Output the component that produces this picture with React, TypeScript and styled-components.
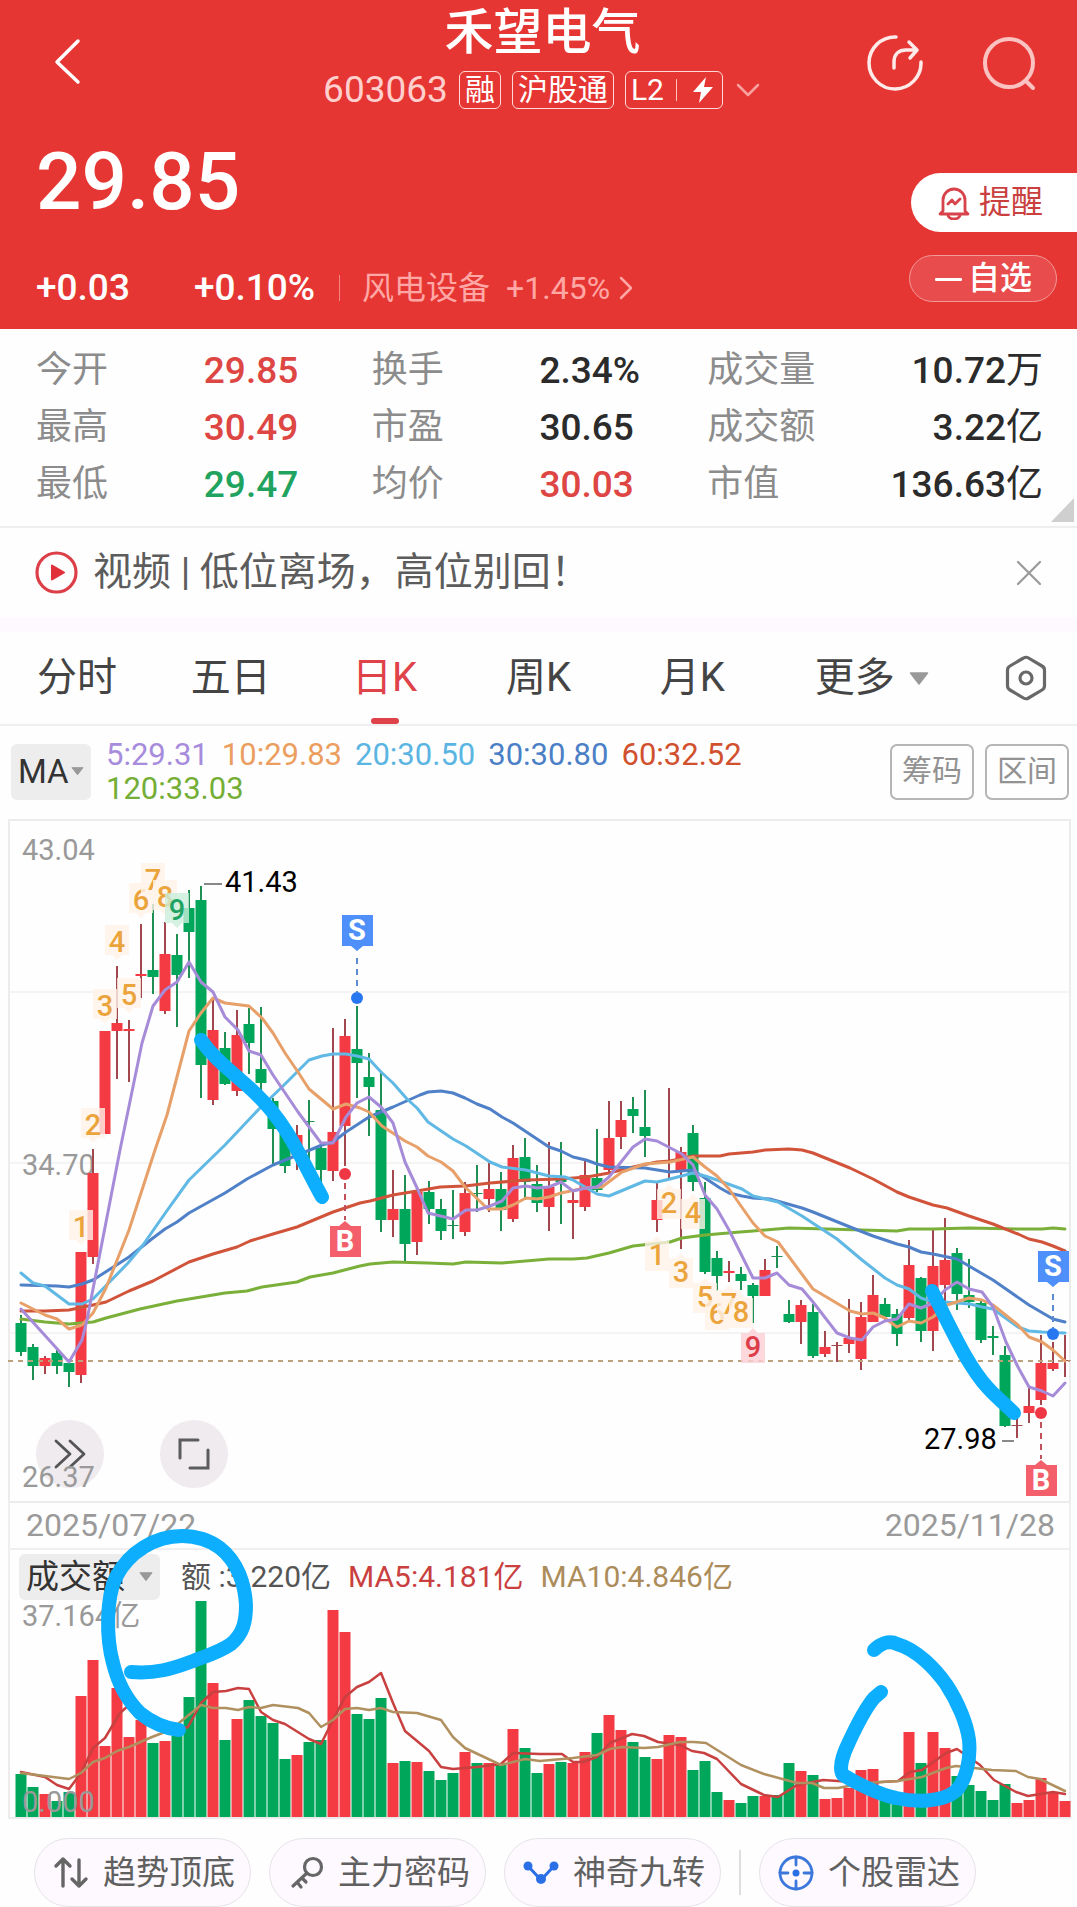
import React from "react";
import styled, { createGlobalStyle } from "styled-components";

const RED = "#e63633";
const UP = "#f43a43";
const DOWN = "#00a65a";
const UP_WICK = "#a2474d";
const DOWN_WICK = "#1f8f53";
const PEN = "#0daefe";
const FONT = 'Roboto, "Noto Sans CJK SC", sans-serif';

const GlobalStyle = createGlobalStyle`
  *, *::before, *::after { box-sizing: border-box; }
  body { margin: 0; background: #fff; font-family: ${FONT}; line-height: 1.15; color: #333; }
  button, select { font: inherit; color: inherit; border: 0; padding: 0; margin: 0; background: none; cursor: pointer; }
  h1, p, dl, dd, dt { margin: 0; font-weight: inherit; }
  svg { display: block; }
`;

const Page = styled.main`
  overflow: hidden;
  background: #fefefe;
`;

/* ---------- header ---------- */

const Header = styled.header`
  background: ${RED};
  color: #fff;
`;

const TopBar = styled.div`
  display: grid;
  grid-template-columns: 1fr auto 1fr;
  align-items: center;
  height: 126px;
  padding: 0 40px 0 48px;
`;

const IconButton = styled.button`
  display: inline-flex;
  align-items: center;
  justify-content: center;
`;

const TopActions = styled.div`
  display: flex;
  justify-content: flex-end;
  gap: 58px;
`;

const TitleBlock = styled.div`
  display: flex;
  flex-direction: column;
  align-items: center;
  gap: 8px;
  padding-bottom: 14px;
`;

const Title = styled.h1`
  font-size: 49px;
  line-height: 60px;
  font-weight: 500;
`;

const SubTitle = styled.div`
  display: flex;
  align-items: center;
  gap: 11px;
`;

const Code = styled.span`
  font-size: 37px;
  line-height: 38px;
  color: #ffcfcd;
`;

const Tag = styled.span`
  display: inline-flex;
  align-items: center;
  gap: 12px;
  height: 38px;
  padding: 0 5px;
  border: 1px solid #ffd9d7;
  border-radius: 6px;
  font-size: 30px;
  line-height: 36px;
`;

const TagRule = styled.i`
  width: 1px;
  height: 22px;
  background: #ffc2bf;
`;

const Quote = styled.div`
  display: flex;
  justify-content: space-between;
  height: 203px;
`;

const QuoteMain = styled.div`
  padding: 8px 0 0 36px;
`;

const Price = styled.p`
  font-size: 80px;
  line-height: 96px;
  font-weight: 500;
`;

const Changes = styled.div`
  display: flex;
  align-items: center;
  height: 40px;
  margin-top: 38px;
  font-size: 37px;
  font-weight: 500;
`;

const Change = styled.span<{ $gap: number }>`
  margin-right: ${(p) => p.$gap}px;
`;

const Sector = styled.a`
  display: flex;
  align-items: center;
  gap: 16px;
  padding-left: 22px;
  border-left: 1px solid #f18683;
  font-size: 32px;
  line-height: 26px;
  font-weight: 400;
  color: #ffa7a5;
  text-decoration: none;
`;

const SectorChange = styled.span`
  display: flex;
  align-items: center;
  gap: 9px;
`;

const QuoteActions = styled.div`
  display: flex;
  flex-direction: column;
  align-items: flex-end;
  padding-top: 47px;
  font-size: 32px;
`;

const RemindButton = styled.button`
  display: flex;
  align-items: center;
  gap: 9px;
  height: 59px;
  padding: 0 34px 0 27px;
  border-radius: 30px 0 0 30px;
  background: #fff;
  color: #c9403f;
`;

const WatchButton = styled.button`
  display: flex;
  align-items: center;
  gap: 6px;
  height: 47px;
  margin: 23px 20px 0 0;
  padding: 0 24px 0 25px;
  border: 1px solid #f29a99;
  border-radius: 24px;
  background: #e84c4c;
  font-weight: 500;
`;

/* ---------- stats ---------- */

const Stats = styled.dl`
  position: relative;
  display: grid;
  grid-template-columns: repeat(3, 1fr);
  row-gap: 1px;
  padding: 14px 34px 13px 36px;
  border-bottom: 2px solid #f0eff0;
`;

const Stat = styled.div`
  display: grid;
  grid-template-columns: 1fr 1fr;
  align-items: center;
  height: 56px;
  white-space: nowrap;
`;

const StatLabel = styled.dt`
  font-size: 36px;
  color: #8c8c8c;
`;

const StatValue = styled.dd<{ $color?: string; $end?: boolean }>`
  font-size: 37px;
  font-weight: 500;
  color: ${(p) => p.$color || "#2b2b2b"};
  justify-self: ${(p) => (p.$end ? "end" : "start")};
`;

const StatUnit = styled.span`
  font-weight: 400;
`;

const Corner = styled.span`
  position: absolute;
  right: 3px;
  bottom: 4px;
  border-left: 23px solid transparent;
  border-bottom: 24px solid #cfcfcf;
`;

/* ---------- news ---------- */

const News = styled.section`
  display: flex;
  align-items: center;
  gap: 15px;
  height: 104px;
  padding: 0 34px 0 35px;
  border-bottom: 15px solid #fdf9fe;
`;

const NewsText = styled.a`
  flex: 1;
  font-size: 39px;
  color: #5c5c5c;
  text-decoration: none;
`;

/* ---------- tabs ---------- */

const Tabs = styled.nav`
  display: grid;
  grid-template-columns: 3fr 3fr 3fr 3fr 3fr 4fr 2fr;
  height: 94px;
  border-bottom: 2px solid #f0eff0;
`;

const Tab = styled.button<{ $active?: boolean }>`
  position: relative;
  display: flex;
  align-items: center;
  justify-content: center;
  gap: 14px;
  font-size: 40px;
  color: ${(p) => (p.$active ? "#df4249" : "#444")};
  &::after {
    content: "";
    position: absolute;
    left: calc(50% - 14px);
    bottom: 0;
    width: 28px;
    height: 6px;
    border-radius: 3px;
    background: ${(p) => (p.$active ? "#df4249" : "transparent")};
  }
`;

/* ---------- moving averages ---------- */

const MaRow = styled.section`
  display: flex;
  align-items: center;
  gap: 11px;
  height: 93px;
  padding: 0 8px 2px 11px;
`;

const Picker = styled.label<{ $size: number }>`
  position: relative;
  display: inline-flex;
  align-items: center;
  height: ${(p) => p.$size}px;
  border-radius: 6px;
  background: #eeedee;
`;

const PickerSelect = styled.select<{ $width: number; $font: number }>`
  appearance: none;
  width: ${(p) => p.$width}px;
  height: 100%;
  padding-left: 7px;
  font-size: ${(p) => p.$font}px;
  color: #333;
`;

const PickerArrow = styled.span`
  position: absolute;
  right: 7px;
  pointer-events: none;
`;

const MaValues = styled.div`
  flex: 1;
  display: flex;
  flex-wrap: wrap;
  column-gap: 13px;
  padding: 0 8px 0 4px;
  font-size: 31px;
  line-height: 34px;
`;

const Tinted = styled.span<{ $color: string }>`
  color: ${(p) => p.$color};
`;

const OutlineButton = styled.button`
  height: 56px;
  padding: 0 10px;
  border: 2px solid #b5b5b5;
  border-radius: 7px;
  font-size: 30px;
  color: #929292;
`;

/* ---------- chart ---------- */

const ChartArea = styled.section`
  position: relative;
`;

const PricePanel = styled.div`
  position: relative;
`;

const Drawing = styled.svg`
  position: relative;
  width: 100%;
  height: auto;
  pointer-events: none;
`;

const PenLayer = styled.svg`
  position: absolute;
  inset: 0;
  width: 100%;
  height: 100%;
  pointer-events: none;
`;

const FloatTools = styled.div`
  position: absolute;
  left: 36px;
  bottom: 15px;
  display: flex;
  gap: 56px;
`;

const RoundButton = styled.button`
  display: flex;
  align-items: center;
  justify-content: center;
  width: 68px;
  height: 68px;
  border-radius: 50%;
  background: #efebef;
`;

const ChartText = styled.text<{ $tone?: string; $weight?: number }>`
  font-family: ${FONT};
  font-size: 29px;
  font-weight: ${(p) => p.$weight || 400};
  fill: ${(p) => p.$tone || "#999"};
`;

const Framed = styled.div`
  margin: 0 6px 0 8px;
  border: solid #efefef;
  border-width: 0 2px;
`;

const DateRow = styled(Framed)`
  display: flex;
  align-items: center;
  justify-content: space-between;
  height: 47px;
  padding: 0 14px 0 16px;
  border-bottom-width: 2px;
  font-size: 32px;
  color: #9a9a9a;
`;

const VolumeHead = styled(Framed)`
  display: flex;
  align-items: center;
  gap: 17px;
  height: 50px;
  padding: 4px 0 0 9px;
  font-size: 30px;
  color: #555;
`;

const VolumePicker = styled.div`
  display: flex;
  margin-right: 4px;
`;

/* ---------- chips ---------- */

const Chips = styled.footer`
  display: flex;
  align-items: center;
  gap: 18px;
  padding: 19px 0 0 34px;
`;

const Chip = styled.button`
  flex: none;
  display: flex;
  align-items: center;
  gap: 14px;
  height: 69px;
  padding: 0 15px 0 18px;
  border: 1px solid #e6e3e8;
  border-radius: 35px;
  background: #fdf9fe;
  font-size: 33px;
  color: #606060;
`;

const ChipRule = styled.i`
  flex: none;
  width: 2px;
  height: 45px;
  background: #dedede;
`;

/* ---------- data ---------- */

type Dir = "u" | "d";
// direction, high, body top, body bottom, low
type Candle = [Dir, number, number, number, number];

const candles: Candle[] = [
  ["d", 1315, 1323, 1352, 1356], ["d", 1344, 1347, 1366, 1380], ["u", 1356, 1358, 1366, 1374], ["d", 1348, 1353, 1366, 1374],
  ["d", 1362, 1363, 1372, 1387], ["u", 1252, 1252, 1375, 1383], ["u", 1149, 1173, 1257, 1264], ["u", 1031, 1031, 1134, 1134],
  ["u", 966, 1023, 1031, 1079], ["u", 1020, 1029, 1031, 1082], ["u", 924, 974, 976, 998], ["d", 904, 970, 977, 994],
  ["u", 922, 954, 1011, 1014], ["d", 934, 955, 975, 1027], ["d", 890, 908, 932, 978], ["d", 886, 900, 1065, 1098],
  ["u", 1000, 1030, 1100, 1105], ["d", 1032, 1048, 1084, 1085], ["u", 1010, 1035, 1091, 1096], ["d", 1008, 1024, 1043, 1074],
  ["d", 1007, 1069, 1083, 1092], ["d", 1098, 1101, 1129, 1166], ["d", 1125, 1130, 1166, 1173], ["u", 1125, 1135, 1155, 1170],
  ["d", 1100, 1121, 1122, 1160], ["d", 1143, 1148, 1170, 1184], ["u", 1028, 1132, 1171, 1181], ["u", 1019, 1036, 1126, 1166],
  ["d", 1006, 1049, 1063, 1098], ["d", 1053, 1077, 1087, 1136], ["d", 1073, 1110, 1220, 1232], ["u", 1170, 1209, 1220, 1237],
  ["d", 1175, 1209, 1244, 1263], ["u", 1186, 1192, 1242, 1255], ["d", 1181, 1192, 1209, 1224], ["d", 1199, 1209, 1231, 1240],
  ["d", 1190, 1225, 1226, 1239], ["u", 1182, 1193, 1232, 1236], ["d", 1165, 1193, 1194, 1212], ["u", 1163, 1189, 1199, 1212],
  ["d", 1172, 1189, 1210, 1231], ["u", 1145, 1158, 1219, 1222], ["d", 1138, 1157, 1182, 1200], ["d", 1165, 1184, 1203, 1212],
  ["u", 1142, 1187, 1207, 1231], ["d", 1142, 1176, 1182, 1224], ["u", 1192, 1200, 1203, 1239], ["u", 1161, 1175, 1207, 1211],
  ["d", 1129, 1178, 1190, 1192], ["u", 1101, 1138, 1170, 1173], ["u", 1101, 1120, 1137, 1149], ["d", 1097, 1109, 1116, 1133],
  ["d", 1090, 1127, 1136, 1157], ["u", 1182, 1200, 1220, 1232], ["u", 1088, 1161, 1162, 1178], ["u", 1147, 1152, 1172, 1249],
  ["d", 1125, 1133, 1182, 1191], ["d", 1182, 1198, 1272, 1274], ["d", 1251, 1258, 1276, 1291], ["u", 1261, 1271, 1273, 1282],
  ["d", 1267, 1274, 1281, 1290], ["d", 1283, 1285, 1296, 1323], ["u", 1259, 1270, 1296, 1296], ["d", 1246, 1256, 1257, 1268],
  ["d", 1300, 1314, 1322, 1323], ["u", 1300, 1305, 1322, 1344], ["d", 1304, 1312, 1356, 1358], ["u", 1331, 1347, 1354, 1357],
  ["u", 1342, 1345, 1346, 1362], ["u", 1299, 1338, 1344, 1353], ["u", 1302, 1317, 1359, 1370], ["u", 1275, 1295, 1322, 1322],
  ["d", 1298, 1304, 1317, 1320], ["d", 1309, 1314, 1334, 1346], ["u", 1240, 1265, 1318, 1322], ["d", 1277, 1278, 1331, 1342],
  ["u", 1230, 1266, 1331, 1351], ["u", 1218, 1260, 1285, 1307], ["d", 1248, 1253, 1294, 1310], ["d", 1259, 1295, 1302, 1308],
  ["d", 1301, 1303, 1340, 1343], ["d", 1326, 1336, 1338, 1355], ["d", 1346, 1355, 1426, 1427], ["u", 1417, 1425, 1426, 1438],
  ["u", 1385, 1406, 1413, 1423], ["u", 1335, 1363, 1400, 1405], ["u", 1342, 1363, 1369, 1371], ["u", 1335, 1360, 1361, 1377],
];

const volumeTops = [
  1774, 1787, 1794, 1801, 1792, 1696, 1660, 1746, 1688, 1737, 1720, 1743, 1741, 1736, 1697, 1601, 1683, 1740, 1719, 1700, 1716, 1723,
  1759, 1755, 1742, 1740, 1610, 1632, 1714, 1719, 1698, 1763, 1761, 1762, 1771, 1780, 1773, 1752, 1763, 1763, 1764, 1729, 1748, 1773,
  1764, 1762, 1763, 1752, 1733, 1715, 1730, 1742, 1757, 1759, 1735, 1737, 1770, 1761, 1792, 1800, 1803, 1796, 1796, 1795, 1763, 1771,
  1775, 1799, 1798, 1788, 1770, 1769, 1798, 1800, 1732, 1763, 1732, 1748, 1776, 1785, 1791, 1800, 1784, 1803, 1800, 1778, 1792, 1801,
];

const priceLines: { color: string; points: string }[] = [
  {
    color: "#7ab03a",
    points: "21,1319 45,1322 69,1324 93,1322 106,1318 140,1309 177,1301 225,1293 247,1291 262,1287 297,1282 310,1277 333,1273 360,1266 370,1264 393,1262 428,1263 453,1264 466,1262 502,1263 549,1259 573,1259 587,1258 609,1253 633,1246 670,1242 682,1238 705,1235 740,1232 753,1231 789,1228 827,1229 897,1231 909,1229 933,1229 969,1228 1018,1229 1042,1229 1053,1228 1065,1229",
  },
  {
    color: "#d0533a",
    points: "21,1311 45,1311 69,1310 93,1305 106,1302 129,1291 153,1281 189,1262 213,1254 237,1247 250,1241 273,1234 297,1227 333,1212 360,1203 370,1201 393,1195 417,1191 440,1187 465,1186 490,1183 527,1180 560,1179 587,1177 609,1173 633,1167 657,1162 670,1161 693,1156 720,1156 729,1154 753,1152 765,1150 789,1149 802,1150 813,1153 850,1168 873,1179 897,1192 909,1197 933,1205 947,1208 969,1216 993,1224 1018,1234 1029,1239 1042,1242 1053,1246 1065,1251",
  },
  {
    color: "#4f80c8",
    points: "21,1285 57,1286 69,1287 82,1284 93,1280 129,1257 153,1238 165,1229 177,1222 189,1213 225,1193 247,1179 273,1165 305,1152 322,1145 333,1142 346,1132 369,1117 393,1107 420,1095 428,1092 441,1091 453,1093 465,1098 477,1104 490,1109 502,1117 513,1123 549,1147 561,1151 573,1157 586,1160 597,1164 609,1167 645,1168 670,1172 693,1170 705,1178 720,1188 729,1193 742,1196 753,1198 770,1199 802,1208 813,1212 850,1227 873,1236 897,1244 909,1247 921,1252 933,1254 957,1259 969,1266 993,1280 1029,1305 1053,1319 1065,1322",
  },
  {
    color: "#60b8e4",
    points: "21,1273 33,1283 45,1286 69,1304 82,1304 93,1299 128,1263 143,1245 166,1212 189,1180 225,1145 259,1109 282,1087 309,1060 322,1056 333,1054 346,1054 357,1056 369,1059 381,1072 393,1083 407,1099 417,1108 428,1122 453,1139 466,1146 490,1162 502,1167 526,1170 549,1176 565,1177 573,1180 585,1187 597,1194 609,1196 645,1181 657,1182 670,1179 693,1173 705,1176 717,1180 742,1189 753,1196 778,1202 802,1216 837,1239 862,1260 885,1278 897,1285 909,1289 921,1298 930,1301 957,1303 970,1304 982,1307 993,1309 1018,1327 1029,1331 1042,1332 1065,1333",
  },
  {
    color: "#e7a069",
    points: "21,1303 45,1315 57,1319 69,1329 82,1325 93,1313 106,1288 129,1230 155,1150 167,1115 189,1031 201,1013 213,998 225,1003 249,1006 262,1018 273,1033 285,1053 298,1072 309,1089 333,1109 346,1104 360,1108 369,1112 382,1126 405,1141 417,1147 428,1156 441,1162 453,1171 465,1187 488,1209 502,1209 513,1205 526,1198 537,1199 549,1197 561,1193 585,1188 602,1187 622,1172 645,1164 670,1162 693,1157 705,1167 717,1176 729,1189 753,1223 765,1236 778,1242 813,1289 850,1311 862,1314 873,1313 885,1318 897,1327 909,1321 921,1323 933,1317 947,1305 969,1298 982,1300 993,1305 1018,1325 1029,1337 1042,1342 1053,1350 1065,1361",
  },
  {
    color: "#a68cd8",
    points: "21,1309 69,1362 82,1340 87,1320 120,1150 142,1043 153,1006 165,990 177,982 189,962 201,982 213,992 225,1017 238,1030 249,1051 261,1055 273,1075 298,1112 321,1143 333,1143 346,1117 357,1103 369,1097 381,1107 393,1123 405,1162 418,1190 428,1213 453,1219 466,1210 477,1210 490,1206 502,1201 513,1188 526,1186 537,1188 549,1187 561,1182 573,1191 586,1188 597,1187 609,1177 633,1147 645,1139 657,1141 682,1154 693,1165 705,1195 717,1209 729,1230 753,1278 765,1278 777,1273 789,1285 802,1289 813,1302 837,1333 850,1338 862,1340 873,1327 885,1321 897,1319 909,1304 921,1308 933,1303 945,1290 957,1282 969,1289 982,1292 993,1307 1006,1342 1018,1367 1029,1387 1042,1391 1053,1396 1065,1383",
  },
];

const volumeLines: { color: string; points: string }[] = [
  {
    color: "#c8403f",
    points: "21,1772 45,1777 57,1785 69,1789 81,1773 93,1748 105,1738 120,1713 129,1705 153,1716 177,1730 188,1727 201,1703 213,1692 226,1691 238,1688 249,1689 261,1712 273,1720 285,1724 309,1739 321,1744 333,1720 345,1697 357,1687 369,1682 381,1673 393,1703 405,1731 429,1751 441,1767 453,1769 477,1767 501,1764 513,1753 540,1754 562,1754 573,1762 583,1762 597,1757 610,1743 632,1734 644,1736 658,1742 680,1745 692,1751 704,1753 717,1759 741,1784 764,1795 778,1797 797,1785 823,1780 838,1781 865,1783 898,1781 910,1772 922,1770 946,1753 957,1749 980,1765 994,1780 1016,1792 1028,1796 1053,1792 1065,1794",
  },
  {
    color: "#b0905f",
    points: "21,1773 69,1779 81,1773 93,1762 105,1758 117,1751 129,1747 152,1737 165,1732 179,1723 201,1705 213,1708 226,1708 238,1710 249,1707 261,1708 273,1705 298,1708 309,1713 321,1727 333,1720 345,1709 357,1708 369,1710 381,1708 393,1712 417,1713 441,1720 453,1737 465,1748 501,1765 525,1759 540,1761 573,1758 597,1755 610,1749 622,1747 644,1748 658,1747 680,1742 694,1742 706,1743 741,1765 764,1774 797,1783 812,1783 824,1788 838,1788 865,1783 898,1781 922,1777 946,1768 956,1766 992,1770 1016,1771 1028,1777 1040,1779 1065,1791",
  },
];

const countMarks: { n: number; x: number; y: number; below?: boolean; ink?: string; fill?: string }[] = [
  { n: 1, x: 81, y: 1237 }, { n: 2, x: 93, y: 1135 }, { n: 3, x: 105, y: 1016 }, { n: 4, x: 117, y: 952 }, { n: 5, x: 129, y: 1005 },
  { n: 6, x: 141, y: 910 }, { n: 7, x: 153, y: 890 }, { n: 8, x: 165, y: 907 },
  { n: 9, x: 177, y: 920, ink: "#1fa463", fill: "#c9eddb" },
  { n: 1, x: 657, y: 1265, below: true }, { n: 2, x: 669, y: 1213, below: true }, { n: 3, x: 681, y: 1282, below: true },
  { n: 4, x: 693, y: 1223, below: true }, { n: 5, x: 705, y: 1307, below: true }, { n: 6, x: 717, y: 1324, below: true },
  { n: 7, x: 729, y: 1314, below: true }, { n: 8, x: 741, y: 1322, below: true },
  { n: 9, x: 753, y: 1357, below: true, ink: "#dc3d49", fill: "#fccfd5" },
];

const stats = [
  { label: "今开", value: "29.85", color: "#dd4643" },
  { label: "换手", value: "2.34%" },
  { label: "成交量", value: "10.72", unit: "万", end: true },
  { label: "最高", value: "30.49", color: "#dd4643" },
  { label: "市盈", value: "30.65" },
  { label: "成交额", value: "3.22", unit: "亿", end: true },
  { label: "最低", value: "29.47", color: "#1fa35f" },
  { label: "均价", value: "30.03", color: "#dd4643" },
  { label: "市值", value: "136.63", unit: "亿", end: true },
];

const maValues = [
  ["#a78bdc", "5:29.31"],
  ["#eb9e60", "10:29.83"],
  ["#5bb5e2", "20:30.50"],
  ["#4b7fc6", "30:30.80"],
  ["#d1512f", "60:32.52"],
  ["#74ae37", "120:33.03"],
];

/* ---------- drawings ---------- */

const xAt = (i: number) => 21 + i * 12;

function Candles() {
  return (
    <g>
      {candles.map(([dir, high, top, bottom, low], i) => {
        const thin = bottom - top < 2;
        const wick = dir === "u" ? UP_WICK : DOWN_WICK;
        return (
          <g key={i}>
            <rect x={xAt(i) - 1} y={high} width={2} height={low - high} fill={wick} />
            <rect x={xAt(i) - 5.5} y={top} width={11} height={bottom - top} fill={thin ? wick : dir === "u" ? UP : DOWN} />
          </g>
        );
      })}
    </g>
  );
}

function Lines({ items, width }: { items: { color: string; points: string }[]; width: number }) {
  return (
    <g fill="none" strokeWidth={width} strokeLinejoin="round" strokeLinecap="round">
      {items.map((l) => (
        <polyline key={l.color} points={l.points} stroke={l.color} />
      ))}
    </g>
  );
}

function CountMarks() {
  return (
    <g>
      {countMarks.map(({ n, x, y, below, ink = "#eba43c", fill = "#fff3e8" }, i) => (
        <g key={i}>
          <path
            d={
              below
                ? `M${x - 12} ${y - 24}h7l5-5 5 5h7v30h-24z`
                : `M${x - 12} ${y - 27}h24v30h-7l-5 5-5-5h-7z`
            }
            fill={fill}
            opacity={0.8}
          />
          <ChartText x={x} y={y} textAnchor="middle" $tone={ink} $weight={500}>
            {n}
          </ChartText>
        </g>
      ))}
    </g>
  );
}

function TradeFlag({ kind, x, dot, top }: { kind: "S" | "B"; x: number; dot: number; top: number }) {
  const sell = kind === "S";
  return (
    <g>
      <path
        d={sell ? `M${x} ${top + 43}V${dot - 6}` : `M${x} ${dot + 9}V${top - 6}`}
        stroke={sell ? "#5c8bd0" : "#c0505c"}
        strokeWidth={2}
        strokeDasharray="6 5"
      />
      <circle cx={x} cy={dot} r={6} fill={sell ? "#2777f0" : "#ee3644"} />
      <path
        d={
          sell
            ? `M${x - 15} ${top}h31v31h-10l-6 5-6-5h-9z`
            : `M${x - 15} ${top}h9l6-5 6 5h10v31h-31z`
        }
        fill={sell ? "#4f8ff9" : "#f3606b"}
      />
      <ChartText x={x} y={top + 25} textAnchor="middle" $tone="#fff" $weight={700}>
        {kind}
      </ChartText>
    </g>
  );
}

function PriceChart() {
  return (
    <Drawing viewBox="0 819 1077 684" role="img" aria-label="日K线图">
      <g stroke="#f4f4f4" strokeWidth={2}>
        <path d="M9 992H1070M9 1163H1070M9 1333H1070" />
      </g>
      <path d="M9 1503V820H1070V1503" fill="none" stroke="#ececec" strokeWidth={2} />
      <path d="M9 1502H1070" stroke="#ececec" strokeWidth={2} />
      <ChartText x={22} y={1175}>34.70</ChartText>
      <Candles />
      <path d="M8 1361H1070" stroke="#bba27c" strokeWidth={2} strokeDasharray="5 5" />
      <Lines items={priceLines} width={3} />
      <CountMarks />
      <TradeFlag kind="S" x={357} top={915} dot={998} />
      <TradeFlag kind="B" x={345} top={1226} dot={1174} />
      <TradeFlag kind="S" x={1053} top={1251} dot={1334} />
      <TradeFlag kind="B" x={1041} top={1465} dot={1413} />
      <path d="M204 884H222M1002 1441H1014" stroke="#888" strokeWidth={2} />
      <ChartText x={22} y={860}>43.04</ChartText>
      <ChartText x={22} y={1487}>26.37</ChartText>
      <ChartText x={225} y={892} $tone="#000">41.43</ChartText>
      <ChartText x={924} y={1449} $tone="#000">27.98</ChartText>
    </Drawing>
  );
}

function VolumeChart() {
  return (
    <Drawing viewBox="0 1600 1077 219" role="img" aria-label="成交额">
      <path d="M9 1600V1818H1070V1600" fill="none" stroke="#ececec" strokeWidth={2} />
      {volumeTops.map((top, i) => (
        <rect key={i} x={xAt(i) - 5.5} y={top} width={11} height={1817 - top} fill={candles[i][0] === "u" ? UP : DOWN} />
      ))}
      <Lines items={volumeLines} width={2.5} />
      <ChartText x={22} y={1626}>37.164亿</ChartText>
      <ChartText x={22} y={1812}>0.000</ChartText>
    </Drawing>
  );
}

function PenMarks() {
  return (
    <PenLayer viewBox="0 819 1077 1000" aria-hidden="true">
      <g fill="none" stroke={PEN} strokeWidth={14} strokeLinecap="round" strokeLinejoin="round">
        <path d="M201 1040C216 1062 238 1076 257 1095C288 1125 300 1157 322 1197" />
        <path d="M932 1291C948 1322 966 1364 988 1388C996 1397 1005 1404 1014 1413" />
        <path d="M131 1672C155 1674 172 1669 193 1661C206 1656 220 1652 231 1644C243 1634 246 1622 246 1605C245 1585 238 1562 220 1548C208 1539 196 1536 182 1536C155 1536 129 1552 116 1577C106 1598 106 1638 113 1663C118 1684 127 1700 140 1713C151 1722 163 1728 179 1730" />
        <path d="M874 1650C880 1644 889 1640 897 1644C918 1650 936 1670 946 1684C958 1702 967 1724 969 1740C971 1760 966 1780 956 1791C941 1803 914 1802 896 1798C880 1795 856 1783 843 1775C838 1768 844 1752 849 1742C855 1729 864 1710 874 1698L881 1692" />
      </g>
    </PenLayer>
  );
}

const Triangle = ({ size, color = "#999" }: { size: number; color?: string }) => (
  <svg width={size} height={size * 0.65} viewBox="0 0 20 13" aria-hidden="true">
    <path d="M1.5 1h17L10 12z" fill={color} stroke={color} strokeWidth={1.5} strokeLinejoin="round" />
  </svg>
);

/* ---------- page ---------- */

export default function App() {
  return (
    <Page>
      <GlobalStyle />
      <Header>
        <TopBar>
          <div>
            <IconButton aria-label="返回">
              <svg width="38" height="48" viewBox="0 0 38 48" fill="none" stroke="#fff" strokeWidth="3.5" strokeLinecap="round" strokeLinejoin="round">
                <path d="M30 4 9 25l21 20" />
              </svg>
            </IconButton>
          </div>
          <TitleBlock>
            <Title>禾望电气</Title>
            <SubTitle>
              <Code>603063</Code>
              <Tag>融</Tag>
              <Tag>沪股通</Tag>
              <Tag>
                L2
                <TagRule />
                <svg width="28" height="28" viewBox="0 0 28 28" aria-hidden="true">
                  <path d="M17 1 4 16h8l-2 11 14-16h-9z" fill="#fff" />
                </svg>
              </Tag>
              <svg width="28" height="16" viewBox="0 0 28 16" fill="none" stroke="#f8a19f" strokeWidth="2.5" strokeLinecap="round" strokeLinejoin="round">
                <path d="m4 3 10 10L24 3" />
              </svg>
            </SubTitle>
          </TitleBlock>
          <TopActions>
            <IconButton aria-label="分享">
              <svg width="56" height="56" viewBox="0 0 56 56" fill="none" stroke="#ffeaea" strokeWidth="3.5" strokeLinecap="round" strokeLinejoin="round">
                <path d="M29 2A26 26 0 1 0 54 27" />
                <path d="M27 33v-6c0-8 5-12 12-12h9M42 7l8 8-7 8" />
              </svg>
            </IconButton>
            <IconButton aria-label="搜索">
              <svg width="56" height="56" viewBox="0 0 56 56" fill="none" stroke="#fac3c2" strokeWidth="4" strokeLinecap="round">
                <circle cx="28" cy="28" r="24" />
                <path d="m45 46 7 7" />
              </svg>
            </IconButton>
          </TopActions>
        </TopBar>
        <Quote>
          <QuoteMain>
            <Price>29.85</Price>
            <Changes>
              <Change $gap={64}>+0.03</Change>
              <Change $gap={24}>+0.10%</Change>
              <Sector href="#sector">
                <span>风电设备</span>
                <SectorChange>
                  +1.45%
                  <svg width="14" height="24" viewBox="0 0 14 24" fill="none" stroke="currentColor" strokeWidth="2.5" strokeLinecap="round" strokeLinejoin="round">
                    <path d="m2 2 10 10L2 22" />
                  </svg>
                </SectorChange>
              </Sector>
            </Changes>
          </QuoteMain>
          <QuoteActions>
            <RemindButton>
              <svg width="32" height="34" viewBox="0 0 32 34" fill="none" stroke="#d8424a" strokeWidth="2.8" strokeLinecap="round" strokeLinejoin="round">
                <path d="M5 25V14a11 11 0 0 1 22 0v11l3 3H2z" />
                <path d="M10 29a6 4 0 0 0 12 0M10 18l4-4 3 4 5-5" />
              </svg>
              提醒
            </RemindButton>
            <WatchButton>
              <svg width="27" height="4" viewBox="0 0 27 4" aria-hidden="true">
                <rect width="27" height="3" y="1" rx="1" fill="#fff" />
              </svg>
              自选
            </WatchButton>
          </QuoteActions>
        </Quote>
      </Header>

      <Stats>
        {stats.map((s) => (
          <Stat key={s.label}>
            <StatLabel>{s.label}</StatLabel>
            <StatValue $color={s.color} $end={s.end}>
              {s.value}
              {s.unit && <StatUnit>{s.unit}</StatUnit>}
            </StatValue>
          </Stat>
        ))}
        <Corner />
      </Stats>

      <News>
        <svg width="43" height="43" viewBox="0 0 43 43" aria-hidden="true">
          <circle cx="21.5" cy="21.5" r="19.5" fill="none" stroke="#dc3f47" strokeWidth="3.2" />
          <path d="M17 14.500v14l12-7z" fill="#e0303a" stroke="#e0303a" strokeWidth="2" strokeLinejoin="round" />
        </svg>
        <NewsText href="#video">视频 | 低位离场，高位别回！</NewsText>
        <IconButton aria-label="关闭">
          <svg width="28" height="28" viewBox="0 0 28 28" stroke="#999" strokeWidth="2.2" strokeLinecap="round">
            <path d="m3 3 22 22M25 3 3 25" />
          </svg>
        </IconButton>
      </News>

      <Tabs>
        <Tab>分时</Tab>
        <Tab>五日</Tab>
        <Tab $active>日K</Tab>
        <Tab>周K</Tab>
        <Tab>月K</Tab>
        <Tab>更多<Triangle size={20} /></Tab>
        <Tab aria-label="设置">
          <svg width="42" height="46" viewBox="0 0 42 46" fill="none" stroke="#686868" strokeWidth="3.2" strokeLinejoin="round">
            <path d="M18.500 3q2.500-1.500 5 0l13.500 8q2.500 1.500 2.500 4v16q0 2.500-2.500 4l-13.500 8q-2.500 1.500-5 0L5 35q-2.500-1.500-2.500-4V15q0-2.500 2.500-4z" />
            <circle cx="21" cy="23" r="6" />
          </svg>
        </Tab>
      </Tabs>

      <MaRow>
        <Picker $size={56}>
          <PickerSelect aria-label="指标" $width={80} $font={33} defaultValue="MA">
            <option>MA</option>
          </PickerSelect>
          <PickerArrow><Triangle size={13} /></PickerArrow>
        </Picker>
        <MaValues>
          {maValues.map(([color, text]) => (
            <Tinted key={text} $color={color}>{text}</Tinted>
          ))}
        </MaValues>
        <OutlineButton>筹码</OutlineButton>
        <OutlineButton>区间</OutlineButton>
      </MaRow>

      <ChartArea>
        <PricePanel>
          <FloatTools>
            <RoundButton aria-label="快进">
              <svg width="34" height="32" viewBox="0 0 34 32" fill="none" stroke="#555" strokeWidth="2.8" strokeLinecap="round" strokeLinejoin="round">
                <path d="m3 3 14 13L3 29M17 3l14 13-14 13" />
              </svg>
            </RoundButton>
            <RoundButton aria-label="全屏">
              <svg width="34" height="34" viewBox="0 0 34 34" fill="none" stroke="#5c5c5c" strokeWidth="3" strokeLinecap="round">
                <path d="M21 3H3v18M31 13v18H13" />
              </svg>
            </RoundButton>
          </FloatTools>
          <PriceChart />
        </PricePanel>
        <DateRow>
          <time>2025/07/22</time>
          <time>2025/11/28</time>
        </DateRow>
        <VolumeHead>
          <VolumePicker>
            <Picker $size={46}>
              <PickerSelect aria-label="副图指标" $width={141} $font={33} defaultValue="成交额">
                <option>成交额</option>
              </PickerSelect>
              <PickerArrow><Triangle size={14} /></PickerArrow>
            </Picker>
          </VolumePicker>
          <span>额 :3.220亿</span>
          <Tinted $color="#c9403f">MA5:4.181亿</Tinted>
          <Tinted $color="#ac8c5a">MA10:4.846亿</Tinted>
        </VolumeHead>
        <VolumeChart />
        <PenMarks />
      </ChartArea>

      <Chips>
        <Chip>
          <svg width="36" height="34" viewBox="0 0 36 34" fill="none" stroke="#666" strokeWidth="3.4" strokeLinecap="round" strokeLinejoin="round">
            <path d="M10 30V3M3 10l7-7 7 7M26 4v26M19 23l7 7 7-7" />
          </svg>
          趋势顶底
        </Chip>
        <Chip>
          <svg width="36" height="34" viewBox="0 0 36 34" fill="none" stroke="#666" strokeWidth="3.2" strokeLinecap="round" strokeLinejoin="round">
            <circle cx="25" cy="11" r="8.500" />
            <path d="M19 17 5 30M9 26l4 5M14 22l4 4" />
          </svg>
          主力密码
        </Chip>
        <Chip>
          <svg width="36" height="34" viewBox="0 0 36 34" fill="none" stroke="#2b6fe6" strokeWidth="3" strokeLinecap="round">
            <path d="m5 10 13 14L31 10" />
            <g fill="#2b6fe6" stroke="none">
              <circle cx="5" cy="10" r="4.500" />
              <circle cx="18" cy="23" r="5" />
              <circle cx="31" cy="10" r="4.500" />
            </g>
          </svg>
          神奇九转
        </Chip>
        <ChipRule />
        <Chip>
          <svg width="36" height="36" viewBox="0 0 36 36" fill="none" stroke="#3c78dc" strokeWidth="2.8" strokeLinecap="round">
            <circle cx="18" cy="18" r="16" />
            <path d="M18 2v8M18 26v8M2 18h8M26 18h8" />
            <circle cx="18" cy="18" r="3.500" fill="#2b6fe6" stroke="none" />
          </svg>
          个股雷达
        </Chip>
      </Chips>
    </Page>
  );
}
